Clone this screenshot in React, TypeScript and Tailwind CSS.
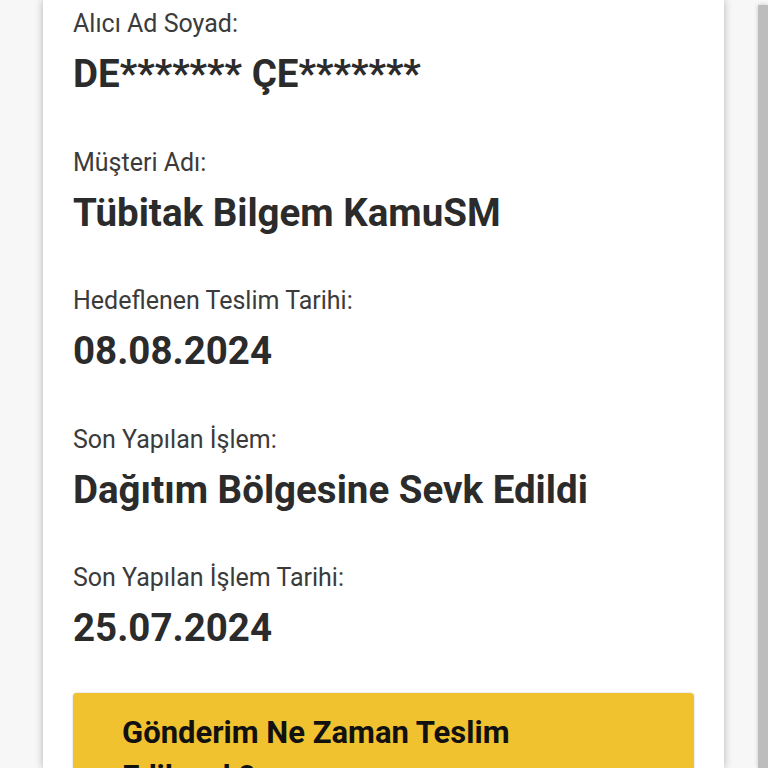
import React from 'react';

const fields = [
  { label: 'Alıcı Ad Soyad:', value: 'DE******* ÇE*******' },
  { label: 'Müşteri Adı:', value: 'Tübitak Bilgem KamuSM' },
  { label: 'Hedeflenen Teslim Tarihi:', value: '08.08.2024' },
  { label: 'Son Yapılan İşlem:', value: 'Dağıtım Bölgesine Sevk Edildi' },
  { label: 'Son Yapılan İşlem Tarihi:', value: '25.07.2024' },
];

export default function App() {
  return (
    <div
      className="flex h-[768px] w-[768px] overflow-hidden bg-[#f7f7f7]"
      style={{ fontFamily: 'Roboto, "Noto Sans", sans-serif' }}
    >
      <div className="w-[43px] shrink-0" />

      {/* Shipment detail card */}
      <div className="flex w-[681px] shrink-0 flex-col bg-white px-[30px] pt-[8px] shadow-[0_0_8px_rgba(0,0,0,0.28)]">
        <div className="flex flex-col gap-[49.5px]">
          {fields.map((f) => (
            <div key={f.label} className="flex flex-col">
              <span className="text-[25px] leading-[32px] text-[#3b3b3b]">{f.label}</span>
              <span className="mt-[11px] text-[38.5px] font-bold leading-[46px] text-[#2b2b2b]">
                {f.value}
              </span>
            </div>
          ))}
        </div>

        <button className="mt-[42px] rounded-[4px] bg-[#f0c230] pl-[49px] pr-[49px] pt-[18px] pb-[20px] text-left shadow-[0_0_2px_rgba(0,0,0,0.25)]">
          <span className="block max-w-[470px] text-[31px] font-bold leading-[44px] text-[#111111]">
            Gönderim Ne Zaman Teslim Edilecek?
          </span>
        </button>
      </div>

      <div className="w-[34px] shrink-0" />

      {/* edge of the next card */}
      <div className="mt-[5px] flex-1 bg-[#bdbdbd] shadow-[0_0_4px_rgba(0,0,0,0.2)]" />
    </div>
  );
}
